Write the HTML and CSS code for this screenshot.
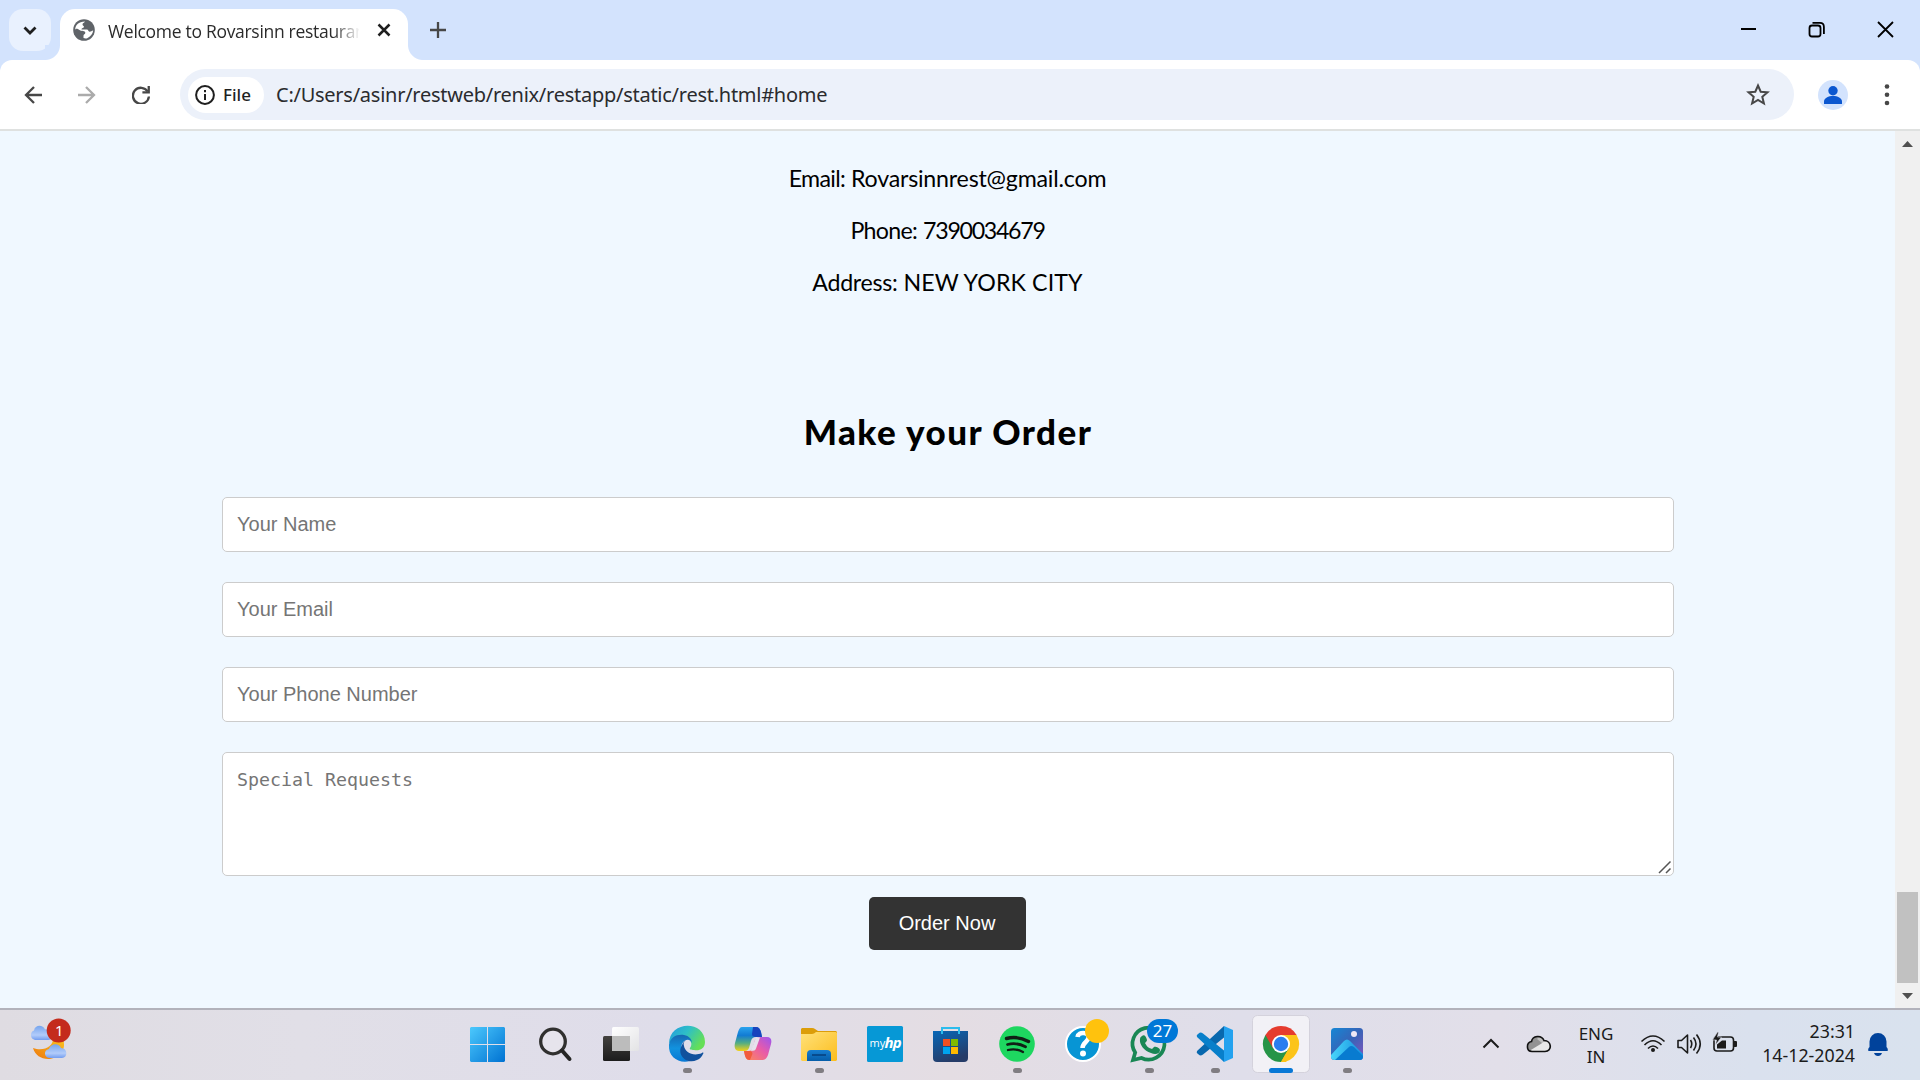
FILE: index.html
```html
<!DOCTYPE html>
<html lang="en">
<head>
<meta charset="utf-8">
<title>Welcome to Rovarsinn restaurant</title>
<link rel="stylesheet" href="styles.css">
</head>
<body>
<header class="tabstrip">
  <div class="tab-search"><svg width="42" height="42" viewBox="0 0 42 42"><path d="M15.500 18.500l5.500 5.500 5.500-5.500" fill="none" stroke="#1f1f1f" stroke-width="2.800"/></svg></div>
  <div class="tab">
    <svg class="globe" width="22" height="22" viewBox="0 0 22 22"><circle cx="11" cy="11" r="10.800" fill="#5f6368"/><path d="M12 2.500c-1 1.500-2.500 1.500-2.500 3s1.500 1.200 1.500 2.300c0 1.500-2.500 1-2.500 2.700h5.500c1.200 0 1.200 2 2.500 2.200 1.500.2 2-1 3.700-1.200-.5 3.500-2.700 6.200-6 7.700-1 .4-2.700.3-3.700-.2v-2.500c0-1.300 1.800-1 1.800-2.700 0-2.500-3.800-1.300-5.800-2.800C4.500 9.500 2.500 9 2.200 11 2 6.500 5.500 2.500 12 2.500z" fill="#fff"/></svg>
    <span class="tab-title">Welcome to Rovarsinn restaurant</span>
    <svg class="tab-close" width="14" height="14" viewBox="0 0 14 14"><path d="M1.500 1.500l11 11m0-11l-11 11" stroke="#1f1f1f" stroke-width="2.500"/></svg>
  </div>
  <svg class="new-tab" width="16" height="16" viewBox="0 0 16 16"><path d="M0 8h16M8 0v16" stroke="#474747" stroke-width="2.300"/></svg>
  <div class="window-controls">
    <svg width="69" height="60" viewBox="0 0 69 60"><path d="M28 29h15" stroke="#000" stroke-width="2"/></svg>
    <svg width="69" height="60" viewBox="0 0 69 60"><g fill="none" stroke="#000" stroke-width="1.800"><rect x="27.500" y="25.500" width="11" height="11" rx="2.500"/><path d="M30.500 22.900h7.500c2.500 0 3.900 1.500 3.900 4v7"/></g></svg>
    <svg width="69" height="60" viewBox="0 0 69 60"><path d="M27 22l15 15m0-15l-15 15" stroke="#000" stroke-width="1.800"/></svg>
  </div>
</header>
<div class="toolbar-bed">
<nav class="toolbar">
  <div class="nav-buttons">
    <svg width="18" height="18" viewBox="0 0 18 18"><path d="M18 9H2M10 1L2 9l8 8" fill="none" stroke="#474747" stroke-width="2.300"/></svg>
    <svg width="18" height="18" viewBox="0 0 18 18"><path d="M0 9h16M8 1l8 8-8 8" fill="none" stroke="#ababab" stroke-width="2.300"/></svg>
    <svg width="18" height="18" viewBox="0 0 18 18"><path d="M15.700 5.500A8 8 0 1 0 16.900 10.500" fill="none" stroke="#474747" stroke-width="2.300"/><path d="M17.900 0v7.500h-7.500V5.300h5.200V0z" fill="#474747"/></svg>
  </div>
  <div class="omnibox">
    <div class="file-chip">
      <svg width="20" height="20" viewBox="0 0 20 20"><circle cx="10" cy="10" r="8.900" fill="none" stroke="#1f1f1f" stroke-width="2"/><path d="M10 9v6M10 5v2.200" stroke="#1f1f1f" stroke-width="2"/></svg>
      <span>File</span>
    </div>
    <span class="url">C:/Users/asinr/restweb/renix/restapp/static/rest.html#home</span>
    <svg class="star" width="24" height="24" viewBox="0 0 24 24"><path d="M12 2.500l2.700 6.200 6.800.6-5.200 4.500 1.600 6.700-5.900-3.600-5.900 3.600 1.600-6.700-5.200-4.500 6.800-.6z" fill="none" stroke="#474747" stroke-width="2"/></svg>
  </div>
  <svg class="avatar" width="30" height="30" viewBox="0 0 30 30"><circle cx="15" cy="15" r="15" fill="#d3e3fd"/><circle cx="15" cy="10.700" r="4.700" fill="#0b57d0"/><path d="M6 24v-2.500c0-3.500 4.500-5.500 9-5.500s9 2 9 5.500V24z" fill="#0b57d0"/></svg>
  <svg class="menu" width="6" height="22" viewBox="0 0 6 22"><g fill="#474747"><circle cx="3" cy="2.500" r="2.300"/><circle cx="3" cy="10.700" r="2.300"/><circle cx="3" cy="19" r="2.300"/></g></svg>
</nav>
</div>
<div class="viewport">
  <main class="page">
    <section class="contact">
      <p><span class="label-email">Email:</span> <span class="email">Rovarsinnrest@gmail.com</span></p>
      <p><span class="label-phone">Phone:</span> <span class="phone">7390034679</span></p>
      <p><span class="label-address">Address:</span> <span class="address">NEW YORK CITY</span></p>
    </section>
    <section class="order">
      <h2>Make your Order</h2>
      <form class="order-form">
        <input type="text" placeholder="Your Name">
        <input type="text" placeholder="Your Email">
        <input type="text" placeholder="Your Phone Number">
        <div class="request-field">
          <textarea placeholder="Special Requests"></textarea>
          <svg class="grip" width="14" height="14" viewBox="0 0 14 14"><path d="M1 13L12.500 1.500M8 13l4.500-4.500" stroke="#555" stroke-width="1.500"/></svg>
        </div>
        <button type="button">Order Now</button>
      </form>
    </section>
  </main>
  <aside class="scrollbar">
    <svg width="25" height="26" viewBox="0 0 25 26"><path d="M7 16l5.500-6 5.500 6z" fill="#505050"/></svg>
    <div class="thumb"></div>
    <svg width="25" height="25" viewBox="0 0 25 25"><path d="M7 10l5.500 6 5.500-6z" fill="#505050"/></svg>
  </aside>
</div>
<footer class="taskbar">
  <svg class="weather" width="60" height="70" viewBox="20 1010 60 70">
    <defs><linearGradient id="cloud" x2="0" y2="1"><stop stop-color="#76a5ee"/><stop offset=".65" stop-color="#b2ccfa"/><stop offset="1" stop-color="#739df0"/></linearGradient><linearGradient id="moon" x1="1" x2="0" y2="1"><stop stop-color="#fbc21f"/><stop offset="1" stop-color="#ed780f"/></linearGradient></defs>
    <path d="M63 1039c4 11-4 20-15 20-7 0-13-4-15-11 11 4 20-2 20-9z" fill="url(#moon)"/>
    <path d="M35 1040a5 5 0 0 1-1-9.500c1-6 9-6 11-1 5-1 8 3 7 6 0 3-2 4.500-4 4.500z" fill="url(#cloud)"/>
    <path d="M50 1058c-6 0-7-8-1-9 2-6 10-6 12-1 7 0 7 10 1 10z" fill="url(#cloud)"/>
    <circle cx="58.700" cy="1030.500" r="12" fill="#c42b1c"/><text x="59.300" y="1036" text-anchor="middle" class="badge-text badge-one">1</text>
  </svg>
  <div class="apps">
    <svg viewBox="456 1010 66 70"><defs><linearGradient id="win" gradientUnits="userSpaceOnUse" x1="470" y1="1027" x2="505" y2="1062"><stop stop-color="#4cc9fd"/><stop offset="1" stop-color="#0072d2"/></linearGradient></defs><path fill="url(#win)" d="M471 1027h16v17h-17v-16zM488 1027h16l1 1v16h-17zM470 1045h17v17h-16l-1-1zM488 1045h17v16l-1 1h-16z"/></svg>
    <svg viewBox="522 1010 66 70"><circle cx="553" cy="1041.500" r="12.300" fill="#e6e4ec" stroke="#30302f" stroke-width="3.300"/><path d="M562 1050.500l7.500 8.500" stroke="#252524" stroke-width="4" stroke-linecap="round"/></svg>
    <svg viewBox="588 1010 66 70"><defs><linearGradient id="dark" x2="0" y2="1"><stop stop-color="#43413f"/><stop offset="1" stop-color="#1c1c1c"/></linearGradient><linearGradient id="light" x2="1" y2="1"><stop stop-color="#fff"/><stop offset="1" stop-color="#e3e3e5"/></linearGradient></defs><rect x="603" y="1036" width="27" height="25" rx="1.500" fill="url(#dark)"/><rect x="612" y="1027" width="27" height="24" rx="1.500" fill="url(#light)"/><path d="M612 1036h18v15h-18z" fill="#bcbcbc"/></svg>
    <svg viewBox="654 1010 66 70"><defs><linearGradient id="edgeTop" x2="1" y2=".5"><stop stop-color="#2199df"/><stop offset=".5" stop-color="#2ebfc7"/><stop offset="1" stop-color="#65df57"/></linearGradient><linearGradient id="edgeLow" x2="0" y2="1"><stop stop-color="#1668b1"/><stop offset=".5" stop-color="#1292de"/><stop offset="1" stop-color="#0878d4"/></linearGradient></defs><path d="M669 1044c0-24 36-24 36-2 0 7-6 9-11 8-3 0-5-1-4-2 3-4 1-9-5-10-7-2-14 1-16 6z" fill="url(#edgeTop)"/><path d="M669 1045c1-8 8-11 15-10 5 1 8 4 8 8-1-4-7-5-10 1-3 7 2 16 8 17-11 3-22-4-21-16z" fill="url(#edgeLow)"/><path d="M682 1045c-6 10 5 20 15 15 3-1 5-4 6-6 1-1 0-2-1-1-9 4-17-1-18-7-1-3 0-4 2-6-2 1-3 3-4 5z" fill="#11519d"/><rect class="dot" x="683" y="1068" width="9" height="5" rx="2.500"/></svg>
    <svg viewBox="720 1010 66 70"><defs><linearGradient id="copA" x2="0" y2="1"><stop stop-color="#2aa3ee"/><stop offset=".35" stop-color="#127bd3"/><stop offset=".67" stop-color="#53ad84"/><stop offset="1" stop-color="#f4d216"/></linearGradient><linearGradient id="copB" x1="1" x2="0" y2="1"><stop stop-color="#9a55f0"/><stop offset=".45" stop-color="#e85ba9"/><stop offset="1" stop-color="#ff8c52"/></linearGradient></defs><path d="M742 1027h14c3 0 4 2 5 5l1 5h-6c-3 0-4 1-5 4l-2 7c-1 2-2 3-4 3h-6c-4 0-5-4-4-8l3-11c1-3 2-5 4-5z" fill="url(#copA)"/><path d="M753 1027h3c3 0 4 2 5 5l1 5h-6c-3 0-4-1-4-3z" fill="#1843bd"/><path d="M762 1037h5c4 0 5 3 4 7l-3 11c-1 3-3 5-6 5h-13c-3 0-4-4-5-9h4c3 0 4-1 5-4l2-7c1-2 3-3 7-3z" fill="url(#copB)"/><path d="M744 1051h5c3 0 4 2 3 4l-2 5c-4 0-5-3-6-9z" fill="#f15c3e"/><path d="M756 1037.500h4l-4 11c-.7 1.800-2 2.500-5 2.500l4-11c.3-1.200.5-1.900 1-2.500z" fill="#e6e2ec"/></svg>
    <svg viewBox="786 1010 66 70"><defs><linearGradient id="folder" x2="1" y2="1"><stop stop-color="#ffe17a"/><stop offset="1" stop-color="#fcbd1c"/></linearGradient><linearGradient id="tray" x2="0" y2="1"><stop stop-color="#167ed1"/><stop offset="1" stop-color="#065da9"/></linearGradient></defs><path d="M802 1028h10q2 0 3 1l3 2h18l1 1v7h-36v-10z" fill="#dc9d09"/><path d="M801 1034h11q2 0 4-2h20l1 1v27l-1 1h-34l-1-1z" fill="url(#folder)"/><path d="M807 1061v-7q0-4 4-4h16q4 0 4 4v7z" fill="url(#tray)"/><path d="M812 1055h14" stroke="#063f7d" stroke-width="1.500"/><rect class="dot" x="815" y="1068" width="9" height="5" rx="2.500"/></svg>
    <svg viewBox="852 1010 66 70"><rect x="867" y="1026" width="36" height="36" rx="1.500" fill="#0698d6"/><text x="869.500" y="1047" class="my">my</text><text x="884.500" y="1048" class="hp">hp</text></svg>
    <svg viewBox="918 1010 66 70"><defs><linearGradient id="store" x2=".4" y2="1"><stop stop-color="#0767b7"/><stop offset="1" stop-color="#263c68"/></linearGradient></defs><path d="M933 1031h35v27q0 4-4 4h-27q-4 0-4-4z" fill="url(#store)"/><path d="M942 1034v-6h17v6" fill="none" stroke="#2cbced" stroke-width="2"/><path d="M943 1039h7v7h-7z" fill="#f25022"/><path d="M951 1039h7v7h-7z" fill="#7fba00"/><path d="M943 1047h7v7h-7z" fill="#00a4ef"/><path d="M951 1047h7v7h-7z" fill="#ffb900"/></svg>
    <svg viewBox="984 1010 66 70"><circle cx="1017" cy="1044" r="17.800" fill="#1ed760"/><g fill="none" stroke="#101f15" stroke-linecap="round"><path d="M1006.500 1038.500q11-3 22 3" stroke-width="3.400"/><path d="M1007.500 1044.500q9-2.500 18 2.300" stroke-width="2.800"/><path d="M1008 1050q8-2 15 2" stroke-width="2.300"/></g><rect class="dot" x="1013" y="1068" width="9" height="5" rx="2.500"/></svg>
    <svg viewBox="1050 1010 66 70"><circle cx="1083" cy="1044" r="17" fill="#0795d4" stroke="#fff" stroke-width="2"/><path d="M1077.500 1037c1-6 12-5 11 1-1 4-6 5-6 10" fill="none" stroke="#fff" stroke-width="4.500"/><circle cx="1083" cy="1053.500" r="3" fill="#fff"/><circle cx="1097" cy="1031" r="12" fill="#ffc20d"/></svg>
    <svg viewBox="1116 1010 66 70"><path d="M1133 1060l2.200-7.500a16 16 0 1 1 6.300 5.500z" fill="none" stroke="#198754" stroke-width="3.700"/><path d="M1142 1036c2-2 4 0 5 4 0 1-1 2-2 3 2 4 4 5 7 6l2-2c1-1 6 1 6 3 0 4-5 5-9 3-7-2-12-9-11-14q0-2 2-3z" fill="#198754"/><rect x="1147" y="1019" width="31" height="24" rx="12" fill="#0078d7"/><text x="1162.500" y="1037" text-anchor="middle" class="badge-text">27</text><rect class="dot" x="1145" y="1068" width="9" height="5" rx="2.500"/></svg>
    <svg viewBox="1182 1010 66 70"><path d="M1224 1026l-27 25q-1 2 1 3l2 1.500q2 0 3-1l21-17z" fill="#0868ae"/><path d="M1224 1062l-27-25q-1-2 1-3l2-1.500q2 0 3 1l21 17z" fill="#087fca"/><path d="M1224 1026l9 4v28l-9 4z" fill="#24a2ef"/><rect class="dot" x="1211" y="1068" width="9" height="5" rx="2.500"/></svg>
    <svg viewBox="1248 1010 66 70"><rect x="1252.500" y="1015.500" width="57" height="57" rx="5" fill="#f2f1f6" stroke="#d4d2dc"/><path d="M1281 1044L1265.400 1035A18 18 0 0 1 1296.600 1035z" fill="#e53b2e"/><path d="M1281 1044L1296.600 1035A18 18 0 0 1 1281 1062z" fill="#fcc419"/><path d="M1281 1044L1281 1062A18 18 0 0 1 1265.400 1035z" fill="#269447"/><path d="M1281 1035h15.600l-3 9H1281z" fill="#fcc419"/><path d="M1265.400 1035l7.800 13.500 7.800-4.500v-9z" fill="#e53b2e"/><path d="M1273.200 1048.500l7.800 13.500 7.800-13.500-7.800-4.500z" fill="#269447"/><path d="M1288.800 1048.500L1281 1062h5l7-12-1-8z" fill="#fcc419"/><circle cx="1281" cy="1044" r="9" fill="#fff"/><circle cx="1281" cy="1044" r="7.200" fill="#2b7def"/><rect x="1269" y="1068" width="24" height="5" rx="2.500" fill="#0878d6"/></svg>
    <svg viewBox="1314 1010 66 70"><defs><linearGradient id="photo" x2="1" y2="1"><stop stop-color="#1587d5"/><stop offset=".5" stop-color="#3763b7"/><stop offset="1" stop-color="#8754bd"/></linearGradient><linearGradient id="hill" x2="1"><stop stop-color="#48d6fb"/><stop offset="1" stop-color="#168ede"/></linearGradient></defs><rect x="1331" y="1028" width="32" height="32" rx="3.500" fill="url(#photo)"/><path d="M1331 1055l13-14q3-3 6 0l13 13v2.500q0 3.500-3.500 3.500h-25q-3.500 0-3.500-3.500z" fill="url(#hill)"/><path d="M1335 1060l14-13q2-2 5 0l9 9q0 4-4 4z" fill="#087bd0"/><circle cx="1354" cy="1034" r="3" fill="#eee8f5"/><rect class="dot" x="1343" y="1068" width="9" height="5" rx="2.500"/></svg>
  </div>
  <div class="tray">
    <svg width="90" height="70" viewBox="1475 1010 90 70"><path d="M1483.500 1047.500l7.500-7.500 7.500 7.500" fill="none" stroke="#1b1b1b" stroke-width="2"/><path d="M1532 1051.500c-6 0-6-9-.500-10 1-6 10-7 12.500-1 8 0 8.500 11 1 11z" fill="#929292"/><path d="M1537 1039c3-3 6-1 8 2l-3 2z" fill="#c0c0c0"/><path d="M1530 1050.500l11.500-7c2-2 4-2.500 6-1.500 4 3 2 9-2 9h-13z" fill="#e8e8e8"/><path d="M1532 1051.500c-6 0-6-9-.500-10 1-6 10-7 12.500-1 8 0 8.500 11 1 11z" fill="none" stroke="#111" stroke-width="1.600"/></svg>
    <div class="lang"><span>ENG</span><span>IN</span></div>
    <svg width="110" height="70" viewBox="1635 1010 110 70"><g fill="none" stroke="#1b1b1b" stroke-width="1.600"><path d="M1641.500 1041.500q11.500-11 23 0M1644.500 1045q8.500-8.500 17 0M1648 1048.500q5-5 10 0"/><path d="M1678 1040.500h3.500l6-5.500v18l-6-5.500h-3.500z" stroke-linejoin="round"/><path d="M1690.500 1040q2.500 4 0 8M1693.500 1037.500q5 6.500 0 13M1696.500 1034.500q7.500 9.500 0 19"/><rect x="1714" y="1037" width="19.500" height="14" rx="3"/></g><circle cx="1653" cy="1050" r="2" fill="#1b1b1b"/><path d="M1717 1048.500v-4l5-4h4v8zM1734 1041h2q1 0 1 1v4q0 1-1 1h-2z" fill="#1b1b1b"/><path d="M1717.500 1032l-5 8h4l-1 5 6-8h-4l1-5z" fill="#1b1b1b" stroke="#dfe0ec" stroke-width=".6"/></svg>
    <div class="clock"><span>23:31</span><span>14-12-2024</span></div>
    <svg class="bell" width="20" height="24" viewBox="1868 1033 20 24"><path d="M1868.500 1051q-1-2 1-4v-5.500a8.500 8.500 0 0 1 17 0v5.500q2 2 1 4zM1874 1053h8q-1 3-4 3t-4-3z" fill="#00429b"/></svg>
  </div>
</footer>
</body>
</html>
```
FILE: styles.css
```css
* { box-sizing: border-box; }
body { margin: 0; width: 1920px; height: 1080px; overflow: hidden; display: flex; flex-direction: column; font-family: "Noto Sans", "Open Sans", sans-serif; background: #f0f8ff; }
svg { display: block; flex: none; }

.tabstrip { height: 60px; background: #d3e3fd; display: flex; padding-left: 9px; flex: none; }
.tab-search { width: 42px; height: 42px; margin: 9px 9px 0 0; border-radius: 14px; background: #e9f1fe; }
.tab { position: relative; width: 348px; height: 51px; margin-top: 9px; padding: 0 17px 9px 13px; display: flex; align-items: center; background: #fff; border-radius: 15px 15px 0 0; }
.tab::before, .tab::after { content: ""; position: absolute; bottom: 0; width: 15px; height: 15px; }
.tab::before { left: -15px; background: radial-gradient(circle at 0 0, #d3e3fd 14.5px, #fff 15.5px); }
.tab::after { right: -15px; background: radial-gradient(circle at 100% 0, #d3e3fd 14.5px, #fff 15.5px); }
.tab-title { width: 251px; margin-left: 13px; padding-top: 2px; overflow: hidden; white-space: nowrap; font: 400 17.5px/24px "Open Sans", "Noto Sans", sans-serif; letter-spacing: -0.3px; color: #2b2b2b; -webkit-mask-image: linear-gradient(90deg, #000 225px, transparent 252px); mask-image: linear-gradient(90deg, #000 225px, transparent 252px); }
.tab-close { margin-left: auto; }
.new-tab { margin: 22px 0 0 22px; }
.window-controls { display: flex; margin-left: auto; }

.toolbar-bed { background: #d3e3fd; flex: none; }
.toolbar { height: 71px; border-bottom: 2px solid #dfe1e0; background: #fff; border-radius: 12px 12px 0 0; display: flex; align-items: center; padding: 0 30px 0 24px; }
.nav-buttons { display: flex; gap: 36px; width: 156px; }
.omnibox { width: 1614px; height: 51px; border-radius: 26px; background: #ecf1fa; display: flex; align-items: center; padding: 0 24px 0 8px; }
.file-chip { width: 76px; height: 36px; border-radius: 18px; background: #fff; display: flex; align-items: center; gap: 8px; padding-left: 7px; font-size: 17px; font-weight: 500; color: #1f1f1f; }
.url { margin-left: 12px; font-size: 20px; letter-spacing: -0.26px; color: #2a2b2e; white-space: nowrap; }
.star { margin-left: auto; }
.avatar { margin-left: 24px; }
.menu { margin-left: auto; }

.viewport { height: 877px; display: flex; flex: none; }
.page { width: 1895px; background: #f0f8ff; color: #000; font-family: Lato, sans-serif; }
.contact { padding-top: 21px; text-align: center; font-size: 23.2px; }
.contact p { height: 52px; line-height: 52px; margin: 0; white-space: pre; }
.label-email, .label-phone { letter-spacing: -0.7px; }
.label-address { letter-spacing: -0.3px; }
.email { letter-spacing: -0.2px; }
.phone { letter-spacing: -1.3px; }
.address { letter-spacing: 0.1px; }
.order { padding: 93px 0 0 222px; width: 1674px; }
.order h2 { margin: 0 0 36px; font-size: 35px; line-height: 60px; font-weight: 900; letter-spacing: 1.45px; text-align: center; }
.order-form { display: flex; flex-direction: column; }
.order-form input { height: 55px; margin: 0 0 30px; }
.order-form input, .order-form textarea { width: 100%; padding: 15px 14px; border: 1px solid #ccc; border-radius: 5px; background: #fff; font: 20px/23px "Liberation Sans", sans-serif; }
.order-form textarea { display: block; height: 124px; resize: none; font: 18.3px/23px "DejaVu Sans Mono", monospace; }
.order-form ::placeholder { color: #757575; opacity: 1; }
.request-field { position: relative; }
.grip { position: absolute; right: 2px; bottom: 2px; }
.order-form button { align-self: center; width: 157px; height: 53px; margin: 21px 2px 0 0; border: 0; border-radius: 5px; background: #333; color: #fff; font: 20px "Liberation Sans", sans-serif; }
.scrollbar { width: 25px; background: #f0f0f0; display: flex; flex-direction: column; align-items: center; }
.thumb { width: 21px; height: 91px; margin-top: auto; background: #c1c1c1; }

.taskbar { height: 72px; border-top: 2px solid #b2b2bb; display: flex; background: linear-gradient(90deg, #dfdce2 0, #e1dfe7 300px, #dfddea 670px, #e4dde3 950px, #dfdeea 1240px, #e2dfe9 1500px, #dae1ee 1750px, #d9e2ee); flex: none; color: #1b1b1b; }
.weather { margin-left: 20px; }
.apps { display: flex; margin-left: 376px; }
.apps svg { width: 66px; height: 70px; }
.dot { fill: #807d82; }
.badge-text { font: 17px "Noto Sans", sans-serif; fill: #fff; }
.badge-one { font-size: 15px; }
.my { font: 11px "Open Sans", sans-serif; fill: #fff; }
.hp { font: italic 700 15px "Open Sans", sans-serif; letter-spacing: -0.8px; fill: #fff; }
.tray { display: flex; margin-left: 95px; font-size: 17px; }
.lang, .clock { display: flex; flex-direction: column; line-height: 23px; padding-top: 12px; }
.lang { width: 62px; align-items: center; margin-right: 8px; }
.clock { width: 110px; align-items: flex-end; font-size: 17.8px; line-height: 24px; padding-top: 9px; }
.bell { margin: 23px 0 0 13px; }
```
